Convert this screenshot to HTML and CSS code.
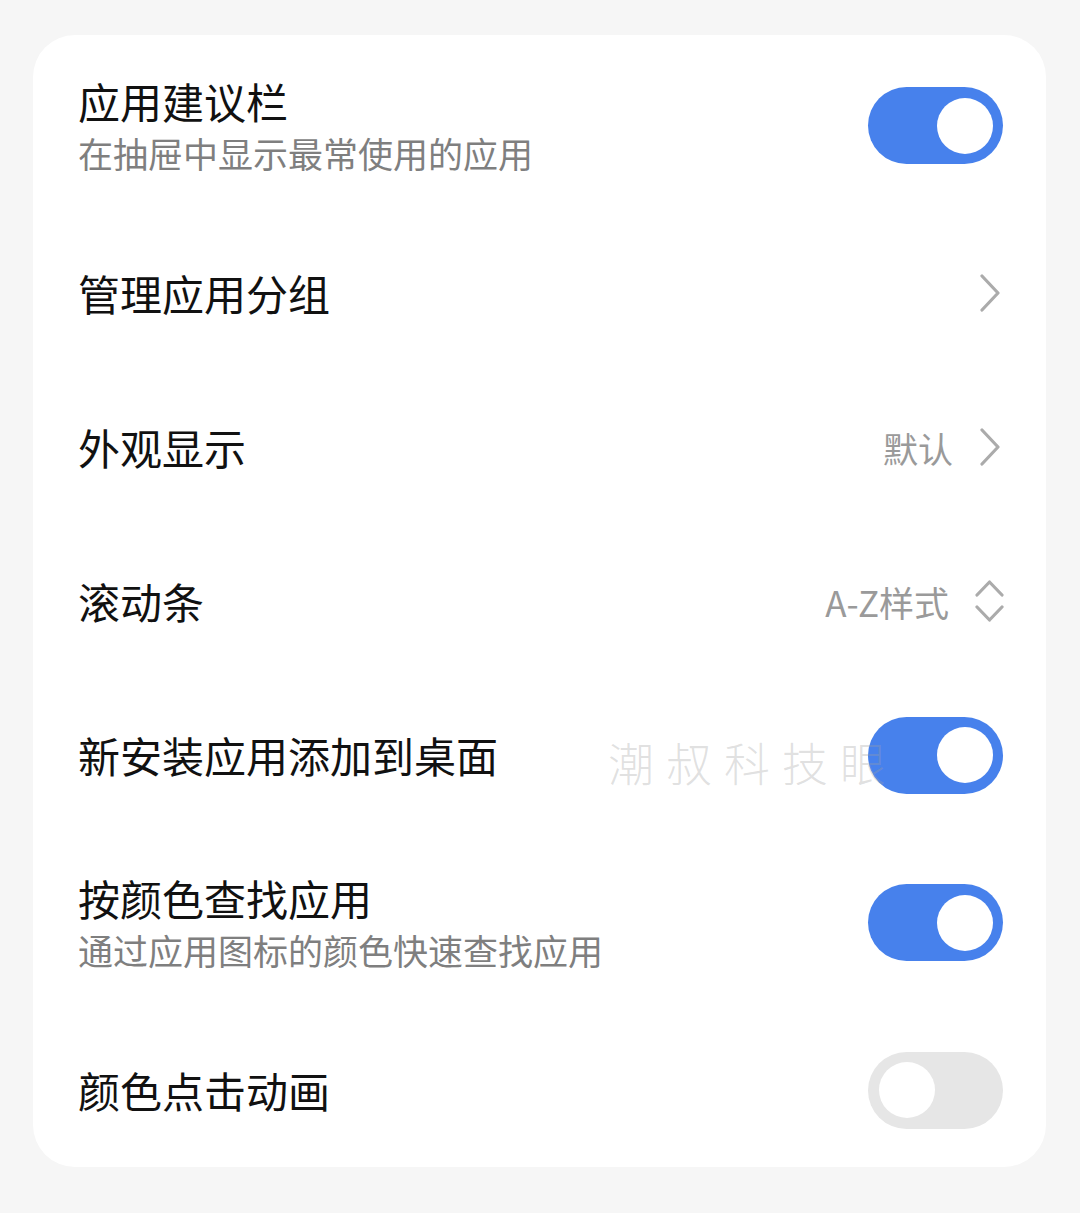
FILE: index.html
```html
<!DOCTYPE html>
<html lang="zh-CN">
<head>
  <meta charset="UTF-8" />
  <meta name="viewport" content="width=device-width, initial-scale=1.0"/>
  <title>桌面设置</title>
  <link rel="stylesheet" href="styles.css">
</head>
<body>

  <div class="card">
    <div class="row tall">
      <div class="label">
        <div class="title">应用建议栏</div>
        <div class="sub">在抽屉中显示最常使用的应用</div>
      </div>
      <div class="switch on"><span class="knob"></span></div>
    </div>

    <div class="row">
      <div class="title">管理应用分组</div>
      <div class="extra">
        <svg class="chevron" viewBox="0 0 22 38"><path d="M3 2 L19 19 L3 36" /></svg>
      </div>
    </div>

    <div class="row">
      <div class="title">外观显示</div>
      <div class="extra">
        <span class="value">默认</span>
        <svg class="chevron" viewBox="0 0 22 38"><path d="M3 2 L19 19 L3 36" /></svg>
      </div>
    </div>

    <div class="row">
      <div class="title">滚动条</div>
      <div class="extra">
        <span class="value">A-Z样式</span>
        <svg class="updown" viewBox="0 0 29 44"><path d="M2 16 L14.5 3 L27 16" /><path d="M2 28 L14.5 41 L27 28" /></svg>
      </div>
    </div>

    <div class="row">
      <div class="title">新安装应用添加到桌面</div>
      <div class="switch on"><span class="knob"></span></div>
      <div class="watermark">潮叔科技眼</div>
    </div>

    <div class="row tall">
      <div class="label">
        <div class="title">按颜色查找应用</div>
        <div class="sub">通过应用图标的颜色快速查找应用</div>
      </div>
      <div class="switch on"><span class="knob"></span></div>
    </div>

    <div class="row">
      <div class="title">颜色点击动画</div>
      <div class="switch"><span class="knob"></span></div>
    </div>
  </div>

</body>
</html>
```

FILE: styles.css
```css
body {
  margin: 0;
  padding: 35px 34px 46px 33px;
  background-color: #f6f6f6;
  font-family: 'Noto Sans CJK SC', 'Noto Sans', sans-serif;
}

.card {
  background-color: #fff;
  border-radius: 42px;
  overflow: hidden;
}

.row {
  position: relative;
  display: flex;
  align-items: center;
  justify-content: space-between;
  height: 154px;
  padding: 0 43px 0 45px;
}

.row.tall {
  height: 181px;
}

.label {
  display: flex;
  flex-direction: column;
  gap: 4px;
  padding-top: 2px;
  padding-bottom: 2px;
}

.title {
  font-size: 42px;
  line-height: 50px;
  color: #111;
}

.sub {
  font-size: 35px;
  line-height: 46px;
  color: #7f7f7f;
}

.extra {
  display: flex;
  align-items: center;
  gap: 26px;
}

.value {
  font-size: 35px;
  color: #9a9a9a;
}

.chevron {
  width: 22px;
  height: 38px;
  margin-right: 2px;
}

.updown {
  width: 29px;
  height: 44px;
  margin-right: -1px;
}

.chevron path,
.updown path {
  fill: none;
  stroke: #ababab;
  stroke-width: 3.2;
  stroke-linecap: round;
  stroke-linejoin: round;
}

.switch {
  display: flex;
  align-items: center;
  width: 135px;
  height: 77px;
  padding: 0 10px 0 11px;
  box-sizing: border-box;
  border-radius: 39px;
  background-color: #e6e6e6;
}

.switch.on {
  justify-content: flex-end;
  background-color: #4781ec;
}

.knob {
  width: 56px;
  height: 56px;
  border-radius: 50%;
  background-color: #fff;
}

.watermark {
  position: absolute;
  left: 575px;
  top: 50%;
  transform: translateY(-50%);
  margin-top: 6px;
  font-size: 46px;
  font-weight: 300;
  letter-spacing: 12px;
  color: rgba(160, 160, 160, 0.33);
  pointer-events: none;
}
```
